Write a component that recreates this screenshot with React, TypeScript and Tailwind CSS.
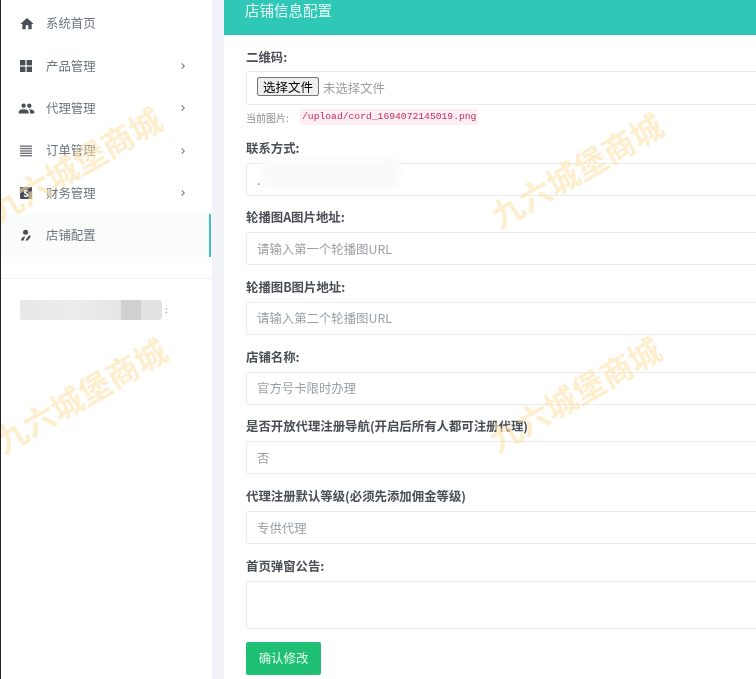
import React from "react";
import { MdHome, MdPeople, MdChevronRight } from "react-icons/md";

const font = "font-['Noto_Sans_CJK_SC','Liberation_Sans',sans-serif]";

function GridIcon() {
  return (
    <svg width="12" height="12" viewBox="0 0 12 12" fill="#4a4f55">
      <rect x="0" y="0" width="5.4" height="5.4" />
      <rect x="6.6" y="0" width="5.4" height="5.4" />
      <rect x="0" y="6.6" width="5.4" height="5.4" />
      <rect x="6.6" y="6.6" width="5.4" height="5.4" />
    </svg>
  );
}

function LinesIcon() {
  return (
    <svg width="12" height="12" viewBox="0 0 12 12" fill="#6a6f75">
      <rect x="0" y="0.5" width="12" height="1.3" />
      <rect x="0" y="2.9" width="12" height="1.3" />
      <rect x="0" y="5.3" width="12" height="1.3" />
      <rect x="0" y="7.7" width="12" height="1.3" />
      <rect x="0" y="10.1" width="12" height="1.3" />
    </svg>
  );
}

function SBox() {
  return (
    <span className="flex h-[12px] w-[12px] items-center justify-center rounded-[1px] bg-[#4a4f55] text-[9px] font-bold leading-none text-white">
      S
    </span>
  );
}

function PersonEdit() {
  return (
    <svg width="13" height="13" viewBox="0 0 14 14" fill="#4a4f55">
      <circle cx="6" cy="3.6" r="2.7" />
      <path d="M1 12.5c0-2.7 2-4.3 4.6-4.4L3.8 12.5z" />
      <path d="M9.8 6.6l2 1.4-3.4 4.5H5.6z" />
    </svg>
  );
}

const nav = [
  { t: "系统首页", i: <MdHome size={16} color="#4a4f55" className="-ml-[1px]" /> },
  { t: "产品管理", i: <GridIcon />, c: true },
  { t: "代理管理", i: <MdPeople size={17} color="#4a4f55" className="-ml-[2px]" />, c: true },
  { t: "订单管理", i: <LinesIcon />, c: true },
  { t: "财务管理", i: <SBox />, c: true },
  { t: "店铺配置", i: <PersonEdit />, active: true },
];

const fields = [
  { label: "轮播图A图片地址:", placeholder: "请输入第一个轮播图URL" },
  { label: "轮播图B图片地址:", placeholder: "请输入第二个轮播图URL" },
  { label: "店铺名称:", placeholder: "官方号卡限时办理" },
  { label: "是否开放代理注册导航(开启后所有人都可注册代理)", placeholder: "否" },
  { label: "代理注册默认等级(必须先添加佣金等级)", placeholder: "专供代理" },
];

const labelBase = "block h-[22px] text-[12.4px] font-bold text-[#4a4f55]";
const labelTop = `${labelBase} leading-[16px]`;
const labelCls = `${labelBase} leading-[14px]`;
const inputCls =
  "block h-[33px] w-full rounded-[2px] border border-[#e9ecef] bg-white px-[10px] text-[12.4px] text-[#6c757d] placeholder:text-[#9aa0a6] outline-none";

function Watermark({ className }: { className: string }) {
  return (
    <div
      className={`pointer-events-none absolute z-10 -rotate-[30deg] whitespace-nowrap text-[32px] font-bold leading-none text-[#fde3ae] opacity-60 ${className}`}
    >
      九六城堡商城
    </div>
  );
}

export default function App() {
  return (
    <div className={`relative flex h-[679px] w-[756px] overflow-hidden border-l border-[#222] bg-[#f1f3f8] blur-[0.35px] ${font}`}>
      <aside className="w-[211px] shrink-0 bg-white">
        <nav className="pt-[2.4px]">
          {nav.map((n) => (
            <div
              key={n.t}
              className={`flex h-[42.4px] items-center pl-[19px] pr-[23px] text-[12.4px] text-[#6c757d] ${
                n.active ? "mr-[1px] border-r-2 border-[#3cc4b4] bg-[#fafbfb] !pr-[21px]" : ""
              }`}
            >
              <span className="flex w-[26px] shrink-0 items-center">{n.i}</span>
              <span className="flex-1">{n.t}</span>
              {n.c && <MdChevronRight size={12} color="#777" />}
            </div>
          ))}
        </nav>
        <div className="mt-[21px] border-t border-[#f1f1f3] px-[19px] pt-[21px]">
          <div className="flex items-center gap-[3px]">
            <div className="flex h-[20px] w-[142px] overflow-hidden rounded-[3px] blur-[0.6px]">
              <div className="w-[101px] bg-gradient-to-r from-[#e8e8e8] via-[#ececec] to-[#e6e6e6]" />
              <div className="w-[20px] bg-[#d0d0d0]" />
              <div className="w-[21px] bg-[#e2e2e2]" />
            </div>
            <span className="text-[9px] leading-none text-[#777]">:</span>
          </div>
        </div>
      </aside>

      <main className="ml-[12px] w-[560px] shrink-0 bg-white">
        <div className="h-[35px] bg-[#2fc7b6] pl-[21px] text-[14.5px] leading-[20px] text-[#e8fbf8]">
          店铺信息配置
        </div>
        <form className="px-[22px] pt-[14px]">
          <label className={labelTop}>二维码:</label>
          <div className="flex h-[34px] items-center rounded-[2px] border border-[#e9ecef] pl-[10px]">
            <button
              type="button"
              className="mb-[3px] h-[19px] w-[62px] rounded-[2px] border border-[#767676] bg-[#efefef] text-[12.5px] leading-[17px] text-black"
            >
              选择文件
            </button>
            <span className="ml-[4px] text-[12.4px] text-[#9aa0a6]">未选择文件</span>
          </div>
          <div className="mt-[1px] flex h-[22px] items-center text-[10px] text-[#8a9097]">
            <span className="w-[54px]">当前图片:</span>
            <code className="rounded-[2px] bg-[#fdeef3] px-[2px] py-[1px] font-['Liberation_Mono',monospace] text-[9.7px] text-[#c0305f]">
              /upload/cord_1694072145019.png
            </code>
          </div>
          <label className={`${labelTop} mt-[12px]`}>联系方式:</label>
          <div className="relative mt-[1px] mb-[-0.4px]">
            <input className={inputCls} defaultValue="." />
            <div className="absolute left-[16px] top-[-4px] h-[30px] w-[138px] rounded bg-[#fafafa] blur-[3px]" />
          </div>
          {fields.map((f) => (
            <div key={f.label} className="mt-[14.7px]">
              <label className={labelCls}>{f.label}</label>
              <input className={inputCls} placeholder={f.placeholder} />
            </div>
          ))}
          <div className="mt-[14.7px]">
            <label className={labelCls}>首页弹窗公告:</label>
            <textarea className="block h-[48px] w-full resize-none rounded-[2px] border border-[#e9ecef] bg-white outline-none" />
          </div>
          <button
            type="button"
            className="mt-[13px] h-[33px] w-[75px] rounded-[2px] bg-[#1fc074] text-[12.4px] text-[#e6f9ef]"
          >
            确认修改
          </button>
        </form>
      </main>

      <Watermark className="left-[-22px] top-[147px]" />
      <Watermark className="left-[479px] top-[153px]" />
      <Watermark className="left-[-17px] top-[378px]" />
      <Watermark className="left-[477px] top-[377px]" />
    </div>
  );
}
